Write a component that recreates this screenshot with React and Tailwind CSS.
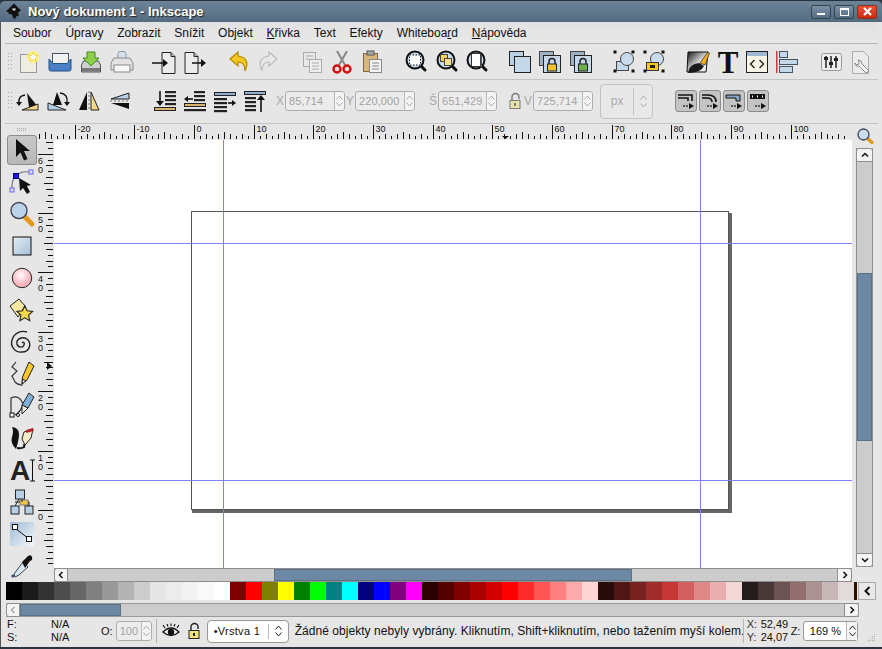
import React from "react";

const Ico = ({ w = 24, h = 24, children }) => (
  <svg width={w} height={h} viewBox={`0 0 ${w} ${h}`} className="block shrink-0 overflow-visible">
    {children}
  </svg>
);

const Mag = ({ children }) => (
  <>
    <path d="M16 15l5 5" stroke="#111" strokeWidth="3" strokeLinecap="round" />
    <circle cx="11" cy="10" r="8.5" fill="#c8dcee" stroke="#111" strokeWidth="2" />
    {children}
  </>
);

const Sel = ({ children }) => (
  <>
    {[[3, 2], [21, 2], [3, 21], [21, 21]].map(([x, y]) => (
      <rect key={x + "-" + y} x={x - 1.5} y={y - 1.5} width="3" height="3" fill="#111" />
    ))}
    {children}
  </>
);

const Lock = ({ x = 0, y = 0, c = "#f0c030" }) => (
  <g transform={`translate(${x} ${y})`}>
    <path d="M2.5 6V3.5a3 3 0 0 1 6 0V6" fill="none" stroke="#222" strokeWidth="1.5" />
    <rect x="1" y="6" width="9" height="7" fill={c} stroke="#222" />
  </g>
);

const OpenLock = ({ dim }) => (
  <Ico w={12} h={16}>
    <g opacity={dim ? 0.55 : 1}>
      <path d="M3 7V4a3.500 3.500 0 0 1 7 0v2" fill="none" stroke="#222" strokeWidth="1.400" />
      <rect x="1" y="7.500" width="10" height="8" fill="#f2e27a" stroke="#222" />
      <rect x="5" y="10" width="2" height="3" fill="#222" />
    </g>
  </Ico>
);

const Bars = ({ x, ys, w = 11 }) =>
  ys.map((y) => <rect key={y} x={x} y={y} width={w} height="2.2" fill="#222" />);

const star = "M12 3l2.600 5.600 6.200.7-4.600 4.200 1.300 6.100L12 16.500 6.500 19.600l1.300-6.100-4.600-4.200 6.200-.7z";

const icons = {
  new: <Ico><rect x="3.500" y="4.500" width="16" height="18" fill="#efece4" stroke="#999" /><circle cx="16" cy="7" r="6" fill="#fff37a" /><path d={star} transform="translate(9.500 .5) scale(.55)" fill="#fff" stroke="#d9b400" /></Ico>,
  open: <Ico><rect x="4.500" y="3.500" width="16" height="12" fill="#f2f2f2" stroke="#456" /><path d="M1 9l4 4.500h14L23 9v10q0 2-2 2H3q-2 0-2-2z" fill="#4a80c4" stroke="#234f88" /></Ico>,
  save: <Ico><path d="M2.500 15l2-4h15l2 4v7h-19z" fill="#cfcfcf" stroke="#555" /><rect x="3" y="18" width="18" height="3.500" fill="#777" /><path d="M8 2h8v6h4l-8 8-8-8h4z" fill="#8ed04c" stroke="#3f8a1c" /></Ico>,
  print: <Ico><rect x="8" y="1.500" width="8" height="8" rx="2" fill="#d7dfe8" stroke="#8899aa" /><path d="M4 8h16l3 5v7H1v-7z" fill="#e2e2e2" stroke="#888" /><rect x="4" y="15" width="16" height="7" fill="#f8f8f8" stroke="#888" /></Ico>,
  import: <Ico><path d="M10 2.500h9l4 4v17H10z" fill="#ececec" stroke="#222" /><path d="M19 2.500v4h4" fill="#bbb" stroke="#222" /><path d="M0 13h12" stroke="#111" strokeWidth="1.500" /><path d="M11 9l5 4-5 4z" fill="#111" /></Ico>,
  export: <Ico><path d="M2 2.500h9l4 4v17H2z" fill="#ececec" stroke="#222" /><path d="M11 2.500v4h4" fill="#bbb" stroke="#222" /><path d="M9 13h11" stroke="#111" strokeWidth="1.500" /><path d="M18 9l5 4-5 4z" fill="#111" /></Ico>,
  undo: <Ico><path d="M11 2L3 9l8 7v-4q7 0 7 9 6-13-7-15z" fill="#f2c81e" stroke="#b88a00" strokeWidth="1.200" /></Ico>,
  redo: <Ico><path d="M13 2l8 7-8 7v-4q-7 0-7 9-6-13 7-15z" fill="#e8e8e8" stroke="#bbb" strokeWidth="1.200" /></Ico>,
  copy: <Ico><rect x="3.500" y="2.500" width="12" height="14" fill="#e8e8e8" stroke="#aaa" /><rect x="9.500" y="9.500" width="12" height="13" fill="#eee" stroke="#aaa" /><path d="M12 13h7M12 16h7M12 19h7M6 6h7M6 9h3" stroke="#aaa" /></Ico>,
  cut: <Ico><path d="M9 15L17 1M15 15L7 1" stroke="#888" strokeWidth="2" /><circle cx="7" cy="19" r="3.500" fill="#f4dcdc" stroke="#cc1111" strokeWidth="2.400" /><circle cx="17" cy="19" r="3.500" fill="#f4dcdc" stroke="#cc1111" strokeWidth="2.400" /></Ico>,
  paste: <Ico><rect x="3.500" y="3.500" width="14" height="18" fill="#d8b77e" stroke="#7d6a45" /><rect x="7" y="1" width="7" height="4" fill="#aaa" stroke="#555" /><rect x="9.500" y="9.500" width="12" height="13" fill="#f2f2f2" stroke="#888" /><path d="M12 13h7M12 16h7M12 19h7" stroke="#888" /></Ico>,
  zoomSel: <Ico><Mag><rect x="5.500" y="5" width="11" height="10" fill="#fff" stroke="#111" strokeDasharray="1.500 1.500" /></Mag></Ico>,
  zoomDraw: <Ico><Mag><rect x="5.500" y="4.500" width="7" height="7" fill="#f2d060" stroke="#444" /><rect x="9.500" y="8.500" width="7" height="7" fill="#f7e08a" stroke="#444" /></Mag></Ico>,
  zoomPage: <Ico><Mag><rect x="6.500" y="3.500" width="9" height="13" fill="#fff" stroke="#333" /><rect x="15.500" y="5" width="1.500" height="12" fill="#555" /></Mag></Ico>,
  dup: <Ico><rect x="1.500" y="1.500" width="14" height="14" fill="#b8cfe4" stroke="#222" /><rect x="6.500" y="6.500" width="16" height="16" fill="#c4d8ea" stroke="#222" /></Ico>,
  clone: <Ico><rect x="1.500" y="1.500" width="14" height="14" fill="#9db2c5" stroke="#444" /><rect x="5.500" y="5.500" width="17" height="17" fill="#c4d8ea" stroke="#222" /><Lock x="8.500" y="8" /></Ico>,
  unlink: <Ico><rect x="1.500" y="1.500" width="14" height="14" fill="#9db2c5" stroke="#444" /><rect x="5.500" y="5.500" width="17" height="17" fill="#c4d8ea" stroke="#222" /><Lock x="8.500" y="8" c="#6cae4a" /></Ico>,
  group: <Ico><Sel><rect x="4.500" y="11.500" width="12" height="9" fill="#c4d8ea" stroke="#444" /><circle cx="15" cy="9" r="6.500" fill="#c8dcee" stroke="#444" /></Sel></Ico>,
  ungroup: <Ico><Sel><circle cx="15" cy="9" r="6.500" fill="#c8dcee" stroke="#444" /><rect x="4.500" y="12.500" width="12" height="8" fill="#f2c81e" stroke="#333" /><rect x="8" y="15" width="5" height="3" fill="#222" /></Sel></Ico>,
  fill: <Ico><defs><linearGradient id="fg" x1="0" y1="0" x2="1" y2="1"><stop offset="0" stopColor="#111" /><stop offset=".6" stopColor="#f0f0f0" /></linearGradient></defs><path d="M2 2h20L20 22H1z" fill="url(#fg)" stroke="#111" /><path d="M14 13l8-11 1.500 1-4.500 12z" fill="#f6b21a" stroke="#222" strokeWidth=".7" /><path d="M2 23q1-9 11-10l5 3q-3 7-16 7z" fill="#1a1a1a" /></Ico>,
  text: <Ico><text x="12" y="23" textAnchor="middle" fontFamily="Liberation Serif" fontWeight="700" fontSize="31" fill="#111">T</text></Ico>,
  xml: <Ico><rect x="1.500" y="1.500" width="21" height="21" fill="#f7f4e6" stroke="#222" /><rect x="2" y="2" width="20" height="4" fill="#9fb9d2" /><path d="M9.500 10l-4 4 4 4M14.500 10l4 4-4 4" fill="none" stroke="#222" strokeWidth="1.400" /></Ico>,
  align: <Ico><rect x="1" y="1" width="1.500" height="22" fill="#c83c3c" /><rect x="4.500" y="1.500" width="8" height="6" fill="#c4d8ea" stroke="#456" /><rect x="4.500" y="9.500" width="18" height="5" fill="#c4d8ea" stroke="#456" /><rect x="4.500" y="16.500" width="13" height="6" fill="#c4d8ea" stroke="#456" /></Ico>,
  prefs: <Ico><rect x="2.500" y="3.500" width="20" height="17" rx="2" fill="#eee" stroke="#999" /><path d="M7 6v12M12 6v12M17 6v12" stroke="#222" strokeWidth="1.500" /><rect x="5" y="7" width="4" height="3" fill="#222" /><rect x="10" y="12" width="4" height="3" fill="#222" /><rect x="15" y="8" width="4" height="3" fill="#222" /></Ico>,
  docPrefs: <Ico><path d="M3.500 1.500h11l5 5v17h-16z" fill="#ececec" stroke="#aaa" /><path d="M9 10q4 0 4 4l7 7-3 2-7-7q-4 1-4-3l2 2 2-1v-2z" fill="#f4f4f4" stroke="#888" /></Ico>,
  rotCcw: <Ico><path d="M13 4l2 14h9z" fill="#111" transform="translate(-2 0)" /><path d="M6 21l16-6v6z" fill="#f6d78a" stroke="#222" /><path d="M9 6Q2 7 3 14" fill="none" stroke="#111" strokeWidth="1.300" /><path d="M0 13h6l-3 4z" fill="#111" /></Ico>,
  rotCw: <Ico><path d="M10 3L6 16h9z" fill="#111" /><path d="M1 21V14l18 7z" fill="#b8d0e6" stroke="#222" /><path d="M13 4q8 1 7 9" fill="none" stroke="#111" strokeWidth="1.300" /><path d="M17 13h6l-3 4z" fill="#111" /></Ico>,
  flipH: <Ico><path d="M10 3L2 21h8z" fill="#111" /><path d="M14 3l8 18h-8z" fill="#f6d78a" stroke="#222" /><path d="M12 2v20" stroke="#777" strokeDasharray="2 2" /></Ico>,
  flipV: <Ico><path d="M21 4L3 10h18z" fill="#b8d0e6" stroke="#222" /><path d="M21 20L3 14h18z" fill="#111" /><path d="M2 12h20" stroke="#777" strokeDasharray="2 2" /></Ico>,
  lower: <Ico><Bars x="12" ys={[2, 6, 10, 14]} /><path d="M7 2v12" stroke="#111" strokeWidth="1.600" /><path d="M3 12h8l-4 5z" fill="#111" /><rect x="1.500" y="18.500" width="21" height="3" fill="#d9b46a" stroke="#222" /></Ico>,
  lowerOne: <Ico><Bars x="11" ys={[2, 6, 10]} /><path d="M3 10h7" stroke="#111" strokeWidth="1.600" /><path d="M1 10l4-3v6z" fill="#111" /><rect x="1.500" y="14.500" width="21" height="3" fill="#d9b46a" stroke="#222" /><Bars x="1" ys={[20]} w={22} /></Ico>,
  raiseOne: <Ico><rect x="1.500" y="3.500" width="21" height="3" fill="#8fb0d0" stroke="#222" /><Bars x="1" ys={[9, 13, 17, 21]} w={13} /><path d="M15 14h6" stroke="#111" strokeWidth="1.600" /><path d="M23 14l-4-3v6z" fill="#111" /></Ico>,
  raise: <Ico><rect x="1.500" y="2.500" width="21" height="3" fill="#8fb0d0" stroke="#222" /><Bars x="2" ys={[8, 12, 16, 20]} /><path d="M18 9v14" stroke="#111" strokeWidth="1.600" /><path d="M14 11h8l-4-5z" fill="#111" /></Ico>,
  zoomSmall: <Ico w={17} h={16}><path d="M10.500 10.500l4.500 4" stroke="#e09a1a" strokeWidth="3.200" strokeLinecap="round" /><circle cx="6.500" cy="6.500" r="5.500" fill="#c8dcee" stroke="#445" strokeWidth="1.300" /></Ico>,
  eye: <Ico w={18} h={16}><path d="M1 9q8-8 16 0-8 7-16 0z" fill="#fff" stroke="#111" strokeWidth="1.300" /><circle cx="9" cy="9" r="3.300" fill="#111" /><path d="M3 5L1 2M6 3.500L5 1M9 3V.5M12 3.500L13 1M15 5l2-3" stroke="#111" strokeWidth="1.100" /></Ico>,
};

const tools = {
  select: <Ico><path d="M6 1v18l4.500-4.500 3.500 8 3.500-1.500-3.500-8H20z" fill="#111" /></Ico>,
  node: <Ico w={26} h={26}><path d="M3 19Q3 12 5 9M9 5Q14 2 20 3" fill="none" stroke="#777" strokeWidth="1.200" /><rect x="4.500" y="4.500" width="5" height="5" fill="#1a1ad8" stroke="#00008a" /><rect x="20" y="1" width="4" height="4" fill="#ddd" stroke="#66f" /><rect x="1" y="19" width="4" height="4" fill="#ddd" stroke="#66f" /><path d="M10 9l12 7-4 1 3 6-3 2-4-6-3 3z" fill="#111" /></Ico>,
  zoom: <Ico w={26} h={26}><path d="M16 16l7 7" stroke="#e39a1e" strokeWidth="5" strokeLinecap="round" /><circle cx="10" cy="9.500" r="8" fill="#bcd4ea" stroke="#445" strokeWidth="1.400" /></Ico>,
  rect: <Ico w={20} h={20}><defs><linearGradient id="rg" x1="0" y1="0" x2="1" y2="1"><stop offset="0" stopColor="#e4edf5" /><stop offset="1" stopColor="#a4bfd8" /></linearGradient></defs><rect x="1" y="1" width="18" height="18" fill="url(#rg)" stroke="#111" /></Ico>,
  ellipse: <Ico w={22} h={22}><defs><radialGradient id="eg" cx=".45" cy=".35"><stop offset="0" stopColor="#fff" /><stop offset="1" stopColor="#f8b4bc" /></radialGradient></defs><circle cx="11" cy="11" r="9.700" fill="url(#eg)" stroke="#222" /></Ico>,
  star: <Ico w={26} h={26}><path d="M1 9l9-7 6 7-7 11z" fill="#f6e8a0" stroke="#222" /><path d={star} transform="translate(5 6) scale(.9)" fill="#f6d84a" stroke="#222" strokeWidth="1.200" /></Ico>,
  spiral: <Ico><path d="M12 13c1-2 3 0 2 2-1 3-6 3-7-1-1-5 5-8 10-5 5 4 3 13-5 13-7 1-12-6-10-12C4 3 11 0 17 2" fill="none" stroke="#222" strokeWidth="1.400" /></Ico>,
  pencil: <Ico w={26} h={26}><path d="M7 1L3 6l5 4-5 5 3 6q3 3 8 3" fill="none" stroke="#333" strokeWidth="1.200" /><path d="M20 1l5 4-7 14-5 4 .5-7z" fill="#f6c82e" stroke="#222" /><path d="M13 23l.5-5 3.500 2z" fill="#eed" stroke="#222" /></Ico>,
  pen: <Ico w={26} h={26}><path d="M2 22L2 5q8-4 12 6-2 8-8 11" fill="none" stroke="#333" strokeWidth="1.200" /><rect x="1" y="20" width="4" height="4" fill="#fff" stroke="#111" /><circle cx="9" cy="22" r="1.500" fill="#fff" stroke="#111" /><path d="M20 0l5 4-6 11-6-3z" fill="#7fb0d8" stroke="#222" /><path d="M13 12l6 3-6 6z" fill="#eed" stroke="#222" /></Ico>,
  calligraphy: <Ico w={26} h={26}><path d="M3 2q7 1 7 7t-3 15q-6-6-4-12t0-10z" fill="#111" /><path d="M8 23q9 1 7-4" fill="none" stroke="#111" strokeWidth="2" /><path d="M15 7l9-3-2 9-6 7-3-6z" fill="#f8edcc" stroke="#222" /><path d="M17 5l7-2 .5 3-7 2z" fill="#b8202c" /></Ico>,
  text: <Ico w={26} h={26}><text x="11" y="23" textAnchor="middle" fontFamily="Liberation Sans" fontWeight="700" fontSize="28" fill="#222">A</text><path d="M21 3h5M21 24h5M23.500 3v21" stroke="#111" fill="none" /></Ico>,
  connector: <Ico w={24} h={26}><rect x="5.500" y="1" width="9" height="9" fill="#b8d0e6" stroke="#222" /><rect x="10" y="11" width="8" height="5" fill="#f6c84a" stroke="#777" /><rect x="1" y="17" width="8" height="8" fill="#b8d0e6" stroke="#222" /><rect x="15" y="17" width="8" height="8" fill="#b8d0e6" stroke="#222" /><path d="M9 10l-4 7M12 10v3M18 16v1M10 13H5M18 13h1v4" stroke="#222" fill="none" /></Ico>,
  gradient: <Ico><defs><linearGradient id="gg" x1="1" y1="1" x2="0" y2="0"><stop offset="0" stopColor="#f4f7fa" /><stop offset="1" stopColor="#9db9d4" /></linearGradient></defs><rect x="0" y="0" width="24" height="24" fill="url(#gg)" /><path d="M5 6l14 11" stroke="#111" /><rect x="2.500" y="2.500" width="5" height="5" fill="#fff" stroke="#111" /><rect x="16.500" y="14.500" width="5" height="5" fill="#fff" stroke="#111" /></Ico>,
  dropper: <Ico><path d="M13 8l5 5-9 8-4 2-1-3z" fill="#d8e8f2" stroke="#345" /><path d="M12 8l6-6q3-2 4 1t-2 4l-5 7z" fill="#111" /><circle cx="3" cy="22" r="1.600" fill="#446" /></Ico>,
};

const Handle = () => (
  <div className="w-[5px] h-[18px] grid grid-cols-2 gap-px shrink-0">
    {Array.from({ length: 10 }).map((_, i) => (
      <span key={i} className="w-px h-px bg-[#a8a8a8]" />
    ))}
  </div>
);

const Tool = ({ name, w = "w-[30px]" }) => (
  <div className={`${w} flex justify-center shrink-0`}>{icons[name]}</div>
);

const Caret = ({ dir = "up", c = "#777" }) => (
  <svg width="7" height="5" viewBox="0 0 7 5" className="block">
    <path d={dir === "up" ? "M.5 4.500l3-3.500 3 3.500" : "M.5.5l3 3.500 3-3.500"} fill="none" stroke={c} />
  </svg>
);

const Spin = ({ value, w }) => (
  <div className={`${w} h-[20px] flex border border-[#adadad] rounded-[3px] bg-[#ececec] shrink-0`}>
    <div className="flex-1 pl-[3px] text-[#a3a3a3] text-[11px] tracking-[0.1px] leading-[18px] whitespace-nowrap">{value}</div>
    <div className="w-[10px] border-l border-[#b8b8b8] flex flex-col items-center justify-center gap-[2px] bg-[#f4f4f4] rounded-r-[3px]">
      <Caret c="#aaa" />
      <Caret dir="down" c="#aaa" />
    </div>
  </div>
);

const Label = ({ children, className = "" }) => (
  <span className={`text-[#a9a9a9] text-[12px] shrink-0 ${className}`}>{children}</span>
);

const Toggle = ({ kind }) => (
  <div className="w-[22px] h-[22px] rounded-[3px] border border-[#8c8c8c] bg-[#c4c4c4] shrink-0 flex items-center justify-center">
    <svg width="18" height="18" viewBox="0 0 18 18">
      {kind === 0 && <path d="M1 3h14v6M1 6h10v3" fill="none" stroke="#111" strokeWidth="1.600" />}
      {kind === 1 && <path d="M1 3h6q8 0 8 7M1 6h5q5 0 5 4" fill="none" stroke="#111" strokeWidth="1.600" />}
      {kind === 2 && <path d="M1 3h14v6H11V6H1z" fill="#88a8c8" stroke="#111" />}
      {kind === 3 && <path d="M1 2h15v5H1z" fill="#111" />}
      {kind === 3 && <path d="M3 4.500h1M8 4.500h1M13 4.500h1" stroke="#fff" strokeWidth="2" />}
      <path d="M6 14h6" stroke="#333" strokeDasharray="2 1" strokeWidth="1.500" />
      <path d="M12 11l5 3-5 3z" fill="#111" />
    </svg>
  </div>
);

const ScrollBtn = ({ dir, dim, className = "" }) => (
  <div className={`flex items-center justify-center shrink-0 bg-[#f4f4f4] border border-[#8f8f8f] rounded-[3px] ${className}`}>
    <svg width="8" height="8" viewBox="0 0 8 8">
      <path
        d={{ left: "M5.500 1L2.500 4l3 3", right: "M2.500 1l3 3-3 3", up: "M1 5.500l3-3 3 3", down: "M1 2.500l3 3 3-3" }[dir]}
        fill="none"
        stroke={dim ? "#aaa" : "#111"}
        strokeWidth="1.500"
      />
    </svg>
  </div>
);

const Thumb = ({ className = "" }) => (
  <div className={`bg-[#6c88a4] border border-[#5b7186] ${className}`} />
);

const menu = [
  ["Soubor"], ["Úpravy"], ["Zobrazit"], ["Snížit"], ["Objekt"],
  ["", "K", "řivka"], ["Text"], ["Efekty"], ["Whiteboa", "r", "d"], ["", "N", "ápověda"],
];

const palette = [
  "#000000", "#1a1a1a", "#333333", "#4d4d4d", "#666666", "#808080", "#999999", "#b3b3b3", "#cccccc", "#e6e6e6", "#ececec", "#f2f2f2", "#f9f9f9", "#ffffff",
  "#800000", "#ff0000", "#808000", "#ffff00", "#008000", "#00ff00", "#008080", "#00ffff", "#000080", "#0000ff", "#800080", "#ff00ff",
  "#2b0000", "#550000", "#800000", "#aa0000", "#d40000", "#ff0000", "#ff2a2a", "#ff5555", "#ff8080", "#ffaaaa", "#ffd5d5",
  "#280b0b", "#501616", "#782121", "#a02c2c", "#c83737", "#d35f5f", "#de8787", "#e9afaf", "#f4d7d7",
  "#241c1c", "#483737", "#6c5353", "#916f6f", "#ac9393", "#c8b7b7", "#e3dbdb",
];

// 10 units = 59.67px, zero sits at x=194 in the window
const HRuler = () => {
  const ticks = [];
  for (let u = -26; u <= 109; u++) {
    const x = Math.round(194 - 38 + u * 5.967) + 0.5;
    const major = u % 10 === 0;
    const y1 = major ? 1 : u % 5 === 0 ? 8 : u % 2 === 0 ? 10 : 12;
    ticks.push(<line key={u} x1={x} x2={x} y1={y1} y2="15" stroke="#111" />);
    if (major)
      ticks.push(
        <text key={"t" + u} x={x + 2} y="8" fontSize="9" fill="#111" fontFamily="Liberation Sans">
          {u}
        </text>
      );
  }
  return (
    <svg width="812" height="16" className="block">
      {ticks}
      <path d="M464 12h7l-3.500 3z" fill="#111" />
    </svg>
  );
};

const VRuler = () => {
  const ticks = [];
  for (let u = -9; u <= 64; u++) {
    const y = Math.round(510 - 140 - u * 5.94) + 0.5;
    const major = u % 10 === 0;
    const x1 = major ? 0 : u % 5 === 0 ? 6 : u % 2 === 0 ? 8 : 10;
    ticks.push(<line key={u} x1={x1} x2="15" y1={y} y2={y} stroke="#111" />);
    if (major)
      String(u).split("").forEach((d, i) =>
        ticks.push(
          <text key={u + "-" + i} x="0" y={y + 9 + i * 9} fontSize="9" fill="#111" fontFamily="Liberation Sans">
            {d}
          </text>
        )
      );
  }
  return (
    <svg width="16" height="428" className="block shrink-0">
      {ticks}
      <path d="M9 222l5 4-5 4z" fill="#111" />
    </svg>
  );
};

export default function App() {
  const leftTools = Object.keys(tools);
  return (
    <div className="w-[882px] h-[649px] overflow-hidden bg-[#2a3540] font-['Liberation_Sans',sans-serif] text-[12px] text-[#111]">
      <div className="h-[22px] rounded-t-[5px] flex items-center bg-gradient-to-b from-[#6d8498] to-[#536a80] border-t border-[#27313b] pl-[5px] pr-[5px]">
        <svg width="18" height="17" viewBox="0 0 18 16" className="shrink-0">
          <path d="M9 0L1 8l3 1-1 1 4 1 1 3 2 2 1-3 3-1-1-3 3-2z" fill="#111" />
          <path d="M7 5h4l-1 2H8z" fill="#ddd" />
        </svg>
        <span className="ml-[5px] text-white font-bold text-[13px] [text-shadow:1px_1px_1px_#222]">Nový dokument 1 - Inkscape</span>
        <div className="ml-auto flex gap-[3px]">
          {["min", "max", "close"].map((b) => (
            <div
              key={b}
              className={`w-[20px] h-[14px] rounded-[2px] border flex items-center justify-center ${
                b === "close" ? "bg-gradient-to-b from-[#ee5030] to-[#c82a10] border-[#8a3020]" : "bg-gradient-to-b from-[#7b93a9] to-[#546b82] border-[#35434f]"
              }`}
            >
              {b === "min" && <div className="w-[8px] h-[2px] bg-white mt-[5px]" />}
              {b === "max" && <div className="w-[9px] h-[8px] border border-white border-t-2" />}
              {b === "close" && (
                <svg width="9" height="9" viewBox="0 0 9 9">
                  <path d="M1 1l7 7M8 1L1 8" stroke="#fff" strokeWidth="2.200" />
                </svg>
              )}
            </div>
          ))}
        </div>
      </div>

      <div className="h-[625px] bg-[#e6e6e6] border-l border-[#555] pl-[4px] pr-[4px]">
        <div className="h-[22px] flex items-center border-b border-[#b9b9b9] pl-[1px] bg-gradient-to-b from-[#e2e2e2] to-[#e8e8e8]">
          {menu.map(([a, u, b]) => (
            <span key={a + (b || "")} className="px-[6.9px] text-[12px] whitespace-nowrap">
              {a}
              {u && <span className="underline">{u}</span>}
              {b}
            </span>
          ))}
        </div>

        <div className="h-[36px] flex items-center border-b border-[#c4c4c4] pl-[3px]">
          <Handle />
          <Tool name="new" w="w-[31px]" />
          <Tool name="open" w="w-[31px]" />
          <Tool name="save" w="w-[31px]" />
          <Tool name="print" w="w-[31px]" />
          <div className="flex ml-[11px]">
            <Tool name="import" w="w-[31px]" />
            <Tool name="export" w="w-[31px]" />
          </div>
          <div className="flex ml-[14px]">
            <Tool name="undo" w="w-[29px]" />
            <Tool name="redo" w="w-[29px]" />
          </div>
          <div className="flex ml-[15px]">
            <Tool name="copy" />
            <Tool name="cut" />
            <Tool name="paste" />
          </div>
          <div className="flex ml-[14px]">
            <Tool name="zoomSel" w="w-[30.5px]" />
            <Tool name="zoomDraw" w="w-[30.5px]" />
            <Tool name="zoomPage" w="w-[30.5px]" />
          </div>
          <div className="flex ml-[12px]">
            <Tool name="dup" w="w-[30.5px]" />
            <Tool name="clone" w="w-[30.5px]" />
            <Tool name="unlink" w="w-[30.5px]" />
          </div>
          <div className="flex ml-[13px]">
            <Tool name="group" />
            <Tool name="ungroup" />
          </div>
          <div className="flex ml-[14px]">
            <Tool name="fill" w="w-[29.7px]" />
            <Tool name="text" w="w-[29.7px]" />
            <Tool name="xml" w="w-[29.7px]" />
            <Tool name="align" w="w-[29.7px]" />
          </div>
          <div className="flex ml-[14px]">
            <Tool name="prefs" />
            <Tool name="docPrefs" />
          </div>
        </div>

        <div className="h-[44px] flex items-center border-b border-[#c4c4c4] pl-[3px] pb-px">
          <Handle />
          <Tool name="rotCcw" w="w-[30.5px]" />
          <Tool name="rotCw" w="w-[30.5px]" />
          <Tool name="flipH" w="w-[30.5px]" />
          <Tool name="flipV" w="w-[30.5px]" />
          <div className="flex ml-[15px]">
            <Tool name="lower" />
            <Tool name="lowerOne" />
            <Tool name="raiseOne" />
            <Tool name="raise" />
          </div>
          <Label className="ml-[6px] mr-[1px]">X</Label>
          <Spin value="85,714" w="w-[60px]" />
          <Label className="mx-[1px]">Y</Label>
          <Spin value="220,000" w="w-[60px]" />
          <Label className="ml-[14px] mr-[1px]">Š</Label>
          <Spin value="651,429" w="w-[59px]" />
          <div className="ml-[12px] mr-[3px] shrink-0">
            <OpenLock dim />
          </div>
          <Label className="mr-[1px]">V</Label>
          <Spin value="725,714" w="w-[60px]" />
          <div className="ml-[7px] w-[53px] h-[35px] flex border border-[#c2c2c2] rounded-[4px] bg-[#e8e8e8] shrink-0">
            <div className="w-[32px] text-center leading-[33px] text-[#a9a9a9]">px</div>
            <div className="flex-1 my-[3px] border-l border-[#c2c2c2] flex flex-col items-center justify-center gap-[3px]">
              <Caret c="#aaa" />
              <Caret dir="down" c="#aaa" />
            </div>
          </div>
          <div className="ml-[22px] flex gap-[2px]">
            {[0, 1, 2, 3].map((k) => (
              <Toggle key={k} kind={k} />
            ))}
          </div>
        </div>

        <div className="h-[458px] flex">
          <div className="w-[33px] shrink-0 flex flex-col items-center pt-[4px]">
            <div className="grid grid-cols-5 gap-px mb-[3px]">
              {Array.from({ length: 10 }).map((_, i) => (
                <span key={i} className="w-px h-px bg-[#a8a8a8]" />
              ))}
            </div>
            <div className="w-[30px] h-[30px] flex items-center justify-center rounded-[3px] border border-[#8c8c8c] bg-gradient-to-b from-[#c8c8c8] to-[#b8b8b8] mt-[1px] mb-[1px]">
              {tools.select}
            </div>
            <div className="flex flex-col">
              {leftTools.slice(1).map((t) => (
                <div key={t} className="h-[32px] flex items-center justify-center">
                  {tools[t]}
                </div>
              ))}
            </div>
          </div>

          <div className="flex-1 min-w-0 flex flex-col">
            <div className="h-[16px] flex">
              <HRuler />
              <div className="ml-auto mr-[4px] mt-[4px]">{icons.zoomSmall}</div>
            </div>
            <div className="flex h-[428px]">
              <VRuler />
              <div className="relative w-[798px] h-[428px] bg-white shrink-0 overflow-hidden">
                <div className="absolute left-[138px] top-[73px] w-[540px] h-[300px] bg-[#666]" />
                <div className="absolute left-[137px] top-[71px] w-[538px] h-[299px] bg-white border border-[#555]" />
                <div className="absolute left-[169px] top-0 w-px h-full bg-[#8080ff]" />
                <div className="absolute left-[646px] top-0 w-px h-full bg-[#8080ff]" />
                <div className="absolute left-0 top-[103px] h-px w-full bg-[#8080ff]" />
                <div className="absolute left-0 top-[340px] h-px w-full bg-[#8080ff]" />
              </div>
              <div className="w-[15px] ml-[4px] flex flex-col h-[419px] mt-[8px] bg-[#cccccc] border-x border-[#8f8f8f] shrink-0 box-content">
                <ScrollBtn dir="up" className="h-[14px] -mx-px rounded-b-none" />
                <div className="h-[111px]" />
                <Thumb className="h-[168px]" />
                <div className="flex-1" />
                <ScrollBtn dir="down" className="h-[14px] -mx-px rounded-t-none" />
              </div>
            </div>
            <div className="h-[14px] w-[798px] ml-[16px] flex bg-[#cccccc] border-y border-[#8f8f8f]">
              <ScrollBtn dir="left" className="w-[14px] -my-px rounded-r-none" />
              <div className="w-[206px]" />
              <Thumb className="w-[358px]" />
              <div className="flex-1" />
              <ScrollBtn dir="right" className="w-[15px] -my-px rounded-l-none" />
            </div>
          </div>
        </div>

        <div className="h-[18px] flex items-stretch pl-[1px]">
          {palette.map((c, i) => (
            <div key={i} className="w-[16px] shrink-0" style={{ background: c }} />
          ))}
          <div className="w-[3px] bg-[#2b1100] shrink-0" />
          <div className="ml-[1px] w-[18px] border border-[#aaa] bg-[#e9e9e9] flex items-center justify-center">
            <svg width="9" height="10" viewBox="0 0 9 10">
              <path d="M6.500 1L2.500 5l4 4" fill="none" stroke="#111" strokeWidth="2" />
            </svg>
          </div>
        </div>

        <div className="h-[14px] mt-[3px] ml-[1px] w-[853px] flex bg-[#cccccc] border-y border-[#9a9a9a]">
          <ScrollBtn dir="left" dim className="w-[14px] -my-px rounded-r-none" />
          <Thumb className="w-[101px]" />
          <div className="flex-1" />
          <ScrollBtn dir="right" className="w-[15px] -my-px rounded-l-none" />
        </div>

        <div className="h-[28px] flex items-center pl-[2px] text-[11px]">
          <div className="w-[59px] shrink-0 grid grid-cols-[44px_1fr] leading-[13px]">
            <span>F:</span>
            <span>N/A</span>
            <span>S:</span>
            <span>N/A</span>
          </div>
          <span className="ml-[35px] mr-[3px]">O:</span>
          <Spin value="100" w="w-[36px]" />
          <div className="ml-[4px] h-[24px] border-l border-[#b5b5b5]" />
          <div className="ml-[5px]">{icons.eye}</div>
          <div className="ml-[8px] shrink-0">
            <OpenLock />
          </div>
          <div className="ml-[7px] w-[82px] h-[23px] flex items-center rounded-[4px] border border-[#999] bg-white shrink-0">
            <span className="pl-[6px] w-[60px] text-[11px] tracking-[0.3px] whitespace-nowrap">•Vrstva 1</span>
            <div className="flex-1 h-[15px] border-l border-[#bbb] flex flex-col items-center justify-center gap-[2px]">
              <Caret c="#222" />
              <Caret dir="down" c="#222" />
            </div>
          </div>
          <span className="ml-[6px] w-[448px] shrink-0 text-[12px] tracking-[0.05px] whitespace-nowrap">
            Žádné objekty nebyly vybrány. Kliknutím, Shift+kliknutím, nebo tažením myší kolem.
          </span>
          <div className="h-[24px] border-l border-[#b5b5b5]" />
          <div className="ml-[3px] w-[42px] shrink-0 grid grid-cols-[14px_1fr] leading-[13px]">
            <span className="text-[#333]">X:</span>
            <span>52,49</span>
            <span className="text-[#333]">Y:</span>
            <span>24,07</span>
          </div>
          <span className="ml-[2px] mr-[3px]">Z:</span>
          <div className="w-[55px] h-[20px] flex border border-[#999] rounded-[3px] bg-white shrink-0">
            <div className="flex-1 text-center leading-[18px] text-[11px]">169 %</div>
            <div className="w-[11px] border-l border-[#bbb] flex flex-col items-center justify-center gap-[2px] bg-[#f4f4f4]">
              <Caret c="#222" />
              <Caret dir="down" c="#222" />
            </div>
          </div>
          <svg width="9" height="9" viewBox="0 0 9 9" className="ml-[9px] mt-[13px] shrink-0">
            <path d="M7 1h1v1H7zM5 3h1v1H5zM7 3h1v1H7zM3 5h1v1H3zM5 5h1v1H5zM7 5h1v1H7zM1 7h1v1H1zM3 7h1v1H3zM5 7h1v1H5zM7 7h1v1H7z" fill="#aaa" />
          </svg>
        </div>
      </div>
    </div>
  );
}
